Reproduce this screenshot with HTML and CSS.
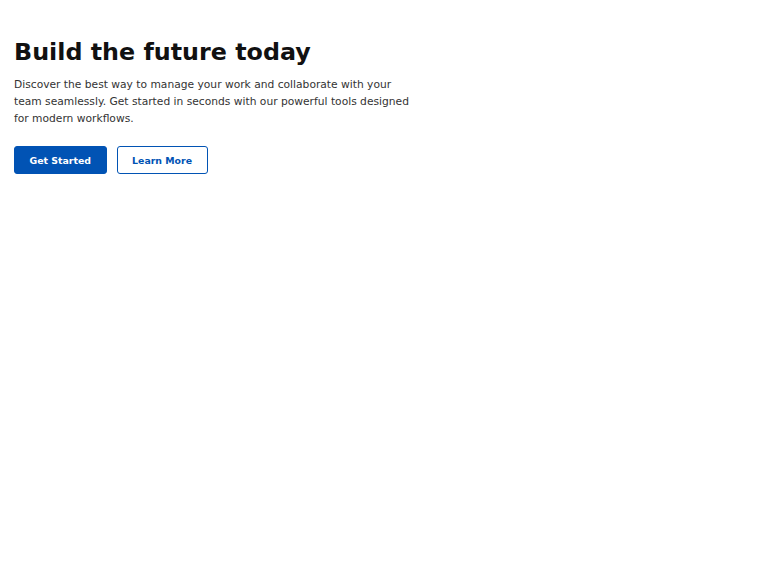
FILE: index.html
```html
<!DOCTYPE html>
<html lang="en">
<head>
  <meta charset="UTF-8">
  <meta name="viewport" content="width=device-width, initial-scale=1.0">
  <title>Build the future today</title>
  <link rel="stylesheet" href="styles.css">
</head>
<body>
  <!-- Hero -->
  <section class="hero">
    <h1 class="hero__title">Build the future today</h1>
    <p class="hero__text">Discover the best way to manage your work and collaborate with your team seamlessly. Get started in seconds with our powerful tools designed for modern workflows.</p>
    <div class="hero__actions">
      <button class="btn btn--primary">Get Started</button>
      <button class="btn btn--outline">Learn More</button>
    </div>
  </section>
</body>
</html>
```

FILE: styles.css
```css
:root {
  --brand: #0153b4;
}
body {
  margin: 0;
  font-family: 'DejaVu Sans', sans-serif;
  background: #fff;
  color: #111;
}
.hero {
  padding: 38px 14px;
  max-width: 400px;
}
.hero__title {
  margin: 0 0 10px;
  font-size: 23.8px;
  font-weight: 700;
  color: #111;
}
.hero__text {
  margin: 0 0 19px;
  font-size: 10.7px;
  line-height: 17px;
  color: #333;
}
.hero__actions {
  display: flex;
  gap: 10px;
}
.btn {
  font-family: inherit;
  font-size: 9.4px;
  font-weight: 700;
  height: 28px;
  padding: 0 14.5px;
  border-radius: 3px;
  border: 1.5px solid var(--brand);
  cursor: pointer;
}
.btn--primary {
  background: var(--brand);
  color: #fff;
}
.btn--outline {
  background: #fff;
  color: var(--brand);
}
```
